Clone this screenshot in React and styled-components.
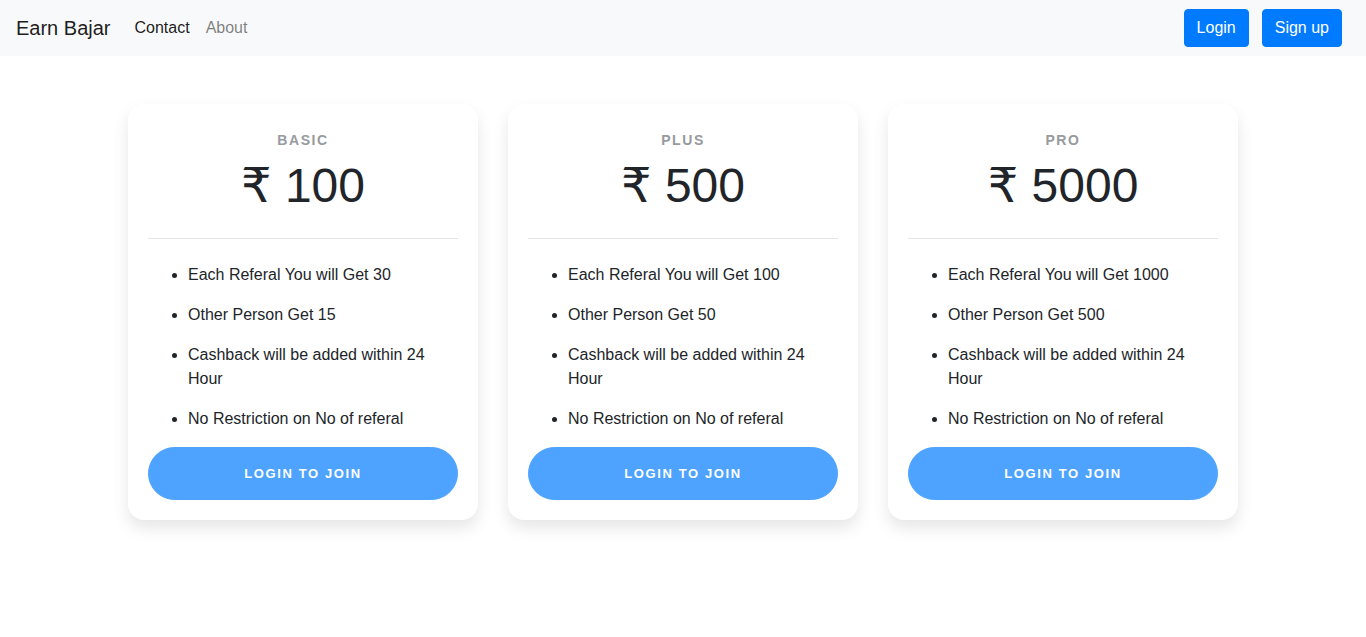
import React from 'react';
import styled, { createGlobalStyle } from 'styled-components';

const GlobalStyle = createGlobalStyle`
  *, *::before, *::after { box-sizing: border-box; }
  body {
    margin: 0;
    background: #fff;
    color: #212529;
    font-family: "Liberation Sans", Arial, sans-serif;
    font-size: 16px;
    line-height: 24px;
  }
`;

const Navbar = styled.nav`
  display: flex;
  align-items: center;
  min-height: 56px;
  padding: 8px 16px;
  background: #f8f9fa;
`;

const Brand = styled.a`
  margin-right: 16px;
  color: rgba(0, 0, 0, 0.9);
  font-size: 20px;
  line-height: 30px;
  text-decoration: none;
`;

const NavList = styled.ul`
  display: flex;
  flex: 1;
  margin: 0;
  padding: 0;
  list-style: none;
`;

const NavLink = styled.a`
  display: block;
  padding: 8px;
  color: ${({ $active }) => ($active ? 'rgba(0, 0, 0, 0.9)' : 'rgba(0, 0, 0, 0.5)')};
  text-decoration: none;
`;

const Actions = styled.div`
  display: flex;
  gap: 13px;
  padding-right: 8px;
`;

const NavButton = styled.button`
  padding: 6px 12px;
  border: 1px solid #007bff;
  border-radius: 4px;
  background: #007bff;
  color: #fff;
  font: inherit;
  cursor: pointer;
`;

const Pricing = styled.main`
  display: grid;
  grid-template-columns: repeat(auto-fit, minmax(280px, 1fr));
  gap: 30px;
  max-width: 1140px;
  margin: 0 auto;
  padding: 48px 15px;
`;

const Card = styled.section`
  display: flex;
  flex-direction: column;
  padding: 20px;
  border-radius: 16px;
  background: #fff;
  box-shadow: 0 8px 16px rgba(0, 0, 0, 0.1);
`;

const PlanName = styled.h2`
  margin: 8px 0;
  color: #979a9e;
  font-size: 14px;
  font-weight: 700;
  line-height: 17px;
  letter-spacing: 0.1rem;
  text-align: center;
  text-transform: uppercase;
`;

const Price = styled.p`
  margin: 0;
  font-size: 48px;
  line-height: 57px;
  text-align: center;
`;

const Currency = styled.span`
  font-family: "DejaVu Sans", sans-serif;
  line-height: 1;
`;

const Divider = styled.hr`
  width: 100%;
  margin: 24px 0;
  border: 0;
  border-top: 1px solid rgba(0, 0, 0, 0.1);
`;

const Features = styled.ul`
  display: flex;
  flex-direction: column;
  gap: 16px;
  margin: 0 0 16px;
  padding-left: 40px;
`;

const JoinButton = styled.button`
  padding: 16px;
  border: 1px solid #4da3ff;
  border-radius: 80px;
  background: #4da3ff;
  color: #fff;
  font-family: inherit;
  font-size: 13px;
  font-weight: 700;
  line-height: 19px;
  letter-spacing: 0.1rem;
  text-transform: uppercase;
  cursor: pointer;
`;

const plans = [
  { name: 'Basic', price: 100, reward: 30, other: 15 },
  { name: 'Plus', price: 500, reward: 100, other: 50 },
  { name: 'Pro', price: 5000, reward: 1000, other: 500 },
];

function PlanCard({ plan }) {
  return (
    <Card>
      <PlanName>{plan.name}</PlanName>
      <Price><Currency>₹</Currency>{` ${plan.price}`}</Price>
      <Divider />
      <Features>
        <li>{`Each Referal You will Get ${plan.reward}`}</li>
        <li>{`Other Person Get ${plan.other}`}</li>
        <li>Cashback will be added within 24 Hour</li>
        <li>No Restriction on No of referal</li>
      </Features>
      <JoinButton type="button">Login to Join</JoinButton>
    </Card>
  );
}

export default function App() {
  return (
    <>
      <GlobalStyle />
      <Navbar>
        <Brand href="#">Earn Bajar</Brand>
        <NavList>
          <li><NavLink href="#contact" $active>Contact</NavLink></li>
          <li><NavLink href="#about">About</NavLink></li>
        </NavList>
        <Actions>
          <NavButton type="button">Login</NavButton>
          <NavButton type="button">Sign up</NavButton>
        </Actions>
      </Navbar>
      <Pricing>
        {plans.map((plan) => <PlanCard key={plan.name} plan={plan} />)}
      </Pricing>
    </>
  );
}
